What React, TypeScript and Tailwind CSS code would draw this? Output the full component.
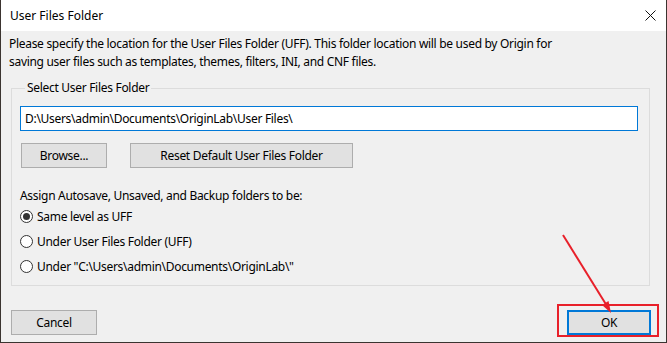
import React from "react";

const font = { fontFamily: '"Segoe UI", "Noto Sans", "Liberation Sans", sans-serif' };

function Radio({ label, checked }: { label: string; checked?: boolean }) {
  return (
    <div className="flex h-[25px] items-center">
      <span className="flex h-[13px] w-[13px] items-center justify-center rounded-full border border-[#333333] bg-white">
        {checked ? <span className="h-[7px] w-[7px] rounded-full bg-[#333333]" /> : null}
      </span>
      <span className="ml-[4px]">{label}</span>
    </div>
  );
}

export default function App() {
  return (
    <div
      className="relative flex h-[343px] w-[667px] flex-col border-x border-b border-[#3b3430] bg-[#f0f0f0] text-[12px] leading-[16px] tracking-[-0.3px] text-black"
      style={font}
    >
      <div className="flex h-[31px] items-center justify-between bg-white pl-[9px] pr-[10px] tracking-normal">
        <span>User Files Folder</span>
        <svg width="11" height="11" viewBox="0 0 11 11">
          <path d="M0.5 0.5 L10.5 10.5 M10.5 0.5 L0.5 10.5" stroke="#111" strokeWidth="1" />
        </svg>
      </div>

      <div className="px-[8px] pt-[4px] leading-[18px]">
        <p>Please specify the location for the User Files Folder (UFF). This folder location will be used by Origin for</p>
        <p>saving user files such as templates, themes, filters, INI, and CNF files.</p>
      </div>

      <fieldset className="ml-[10px] mt-[9px] w-[639px] border border-[#dcdcdc] px-[8px] pb-[6px]">
        <legend className="ml-[5px] px-[2px]">Select User Files Folder</legend>
        <div className="mt-[10px] flex h-[25px] w-[618px] items-center border border-[#0078d7] bg-white pl-[4px]">
          D:\Users\admin\Documents\OriginLab\User Files\
        </div>
        <div className="mt-[12px] flex gap-[23px] pl-[1px]">
          <button className="h-[25px] w-[86px] border border-[#adadad] bg-[#e1e1e1]">Browse...</button>
          <button className="h-[25px] w-[223px] border border-[#adadad] bg-[#e1e1e1]">Reset Default User Files Folder</button>
        </div>
        <p className="mt-[20px]">Assign Autosave, Unsaved, and Backup folders to be:</p>
        <Radio label="Same level as UFF" checked />
        <Radio label="Under User Files Folder (UFF)" />
        <Radio label={'Under "C:\\Users\\admin\\Documents\\OriginLab\\"'} />
      </fieldset>

      <div className="mt-[24px] flex items-center justify-between pl-[10px] pr-[15px]">
        <button className="h-[25px] w-[86px] border border-[#adadad] bg-[#e1e1e1]">Cancel</button>
        <div className="relative">
          <button className="h-[25px] w-[84px] border-2 border-[#0078d7] bg-[#e1e1e1]">OK</button>
          <div className="absolute left-[-10px] top-[-6px] h-[33px] w-[102px] border-2 border-[#e8202a]" />
        </div>
      </div>

      {/* annotation arrow */}
      <svg className="pointer-events-none absolute left-0 top-0" width="667" height="343">
        <line x1="562" y1="235" x2="606" y2="306" stroke="#e8202a" strokeWidth="2" />
        <path d="M610 313 L601 305 L607.5 301 Z" fill="#e8202a" />
      </svg>
    </div>
  );
}
